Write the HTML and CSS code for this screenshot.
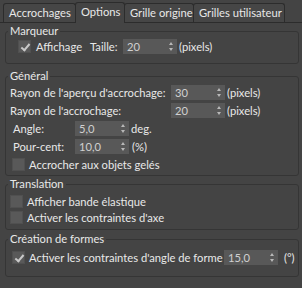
FILE: index.html
```html
<!DOCTYPE html>
<html lang="fr">
<head>
<meta charset="utf-8">
<link rel="stylesheet" href="styles.css">
</head>
<body>
<div class="tabs">
  <div class="tab t1">Accrochages</div>
  <div class="tab t2 active">Options</div>
  <div class="tab t3">Grille origine</div>
  <div class="tab t4">Grilles utilisateur</div>
</div>

<fieldset class="group g-marq">
  <legend>Marqueur</legend>
  <div class="row r-marq">
    <span class="cb checked"></span><span class="lbl l-aff">Affichage</span>
    <span class="lbl l-taille">Taille:</span>
    <span class="spin"><span class="val">20</span><span class="arr"></span></span>
    <span class="unit">(pixels)</span>
  </div>
</fieldset>

<fieldset class="group g-gen">
  <legend>Général</legend>
  <div class="row">
    <span class="lbl l-rayon">Rayon de l'aperçu d'accrochage:</span>
    <span class="spin"><span class="val">30</span><span class="arr"></span></span>
    <span class="unit">(pixels)</span>
  </div>
  <div class="row">
    <span class="lbl l-rayon">Rayon de l'accrochage:</span>
    <span class="spin"><span class="val">20</span><span class="arr"></span></span>
    <span class="unit">(pixels)</span>
  </div>
  <div class="row">
    <span class="lbl l-angle">Angle:</span>
    <span class="spin"><span class="val">5,0</span><span class="arr"></span></span>
    <span class="unit">deg.</span>
  </div>
  <div class="row">
    <span class="lbl l-angle">Pour-cent:</span>
    <span class="spin"><span class="val">10,0</span><span class="arr"></span></span>
    <span class="unit u-pct">(%)</span>
  </div>
  <div class="row r-cb r-gel">
    <span class="cb"></span><span class="lbl">Accrocher aux objets gelés</span>
  </div>
</fieldset>

<fieldset class="group g-trans">
  <legend>Translation</legend>
  <div class="row r-cb r-tr">
    <span class="cb"></span><span class="lbl">Afficher bande élastique</span>
  </div>
  <div class="row r-cb r-tr">
    <span class="cb"></span><span class="lbl">Activer les contraintes d'axe</span>
  </div>
</fieldset>

<fieldset class="group g-crea">
  <legend>Création de formes</legend>
  <div class="row r-cb r-crea">
    <span class="cb checked"></span><span class="lbl l-crea">Activer les contraintes d'angle de forme</span>
    <span class="spin"><span class="val">15,0</span><span class="arr"></span></span>
    <span class="unit u-deg">(°)</span>
  </div>
</fieldset>
</body>
</html>
```
FILE: styles.css
```css
html, body {
  margin: 0;
  padding: 0;
  background: #444444;
  width: 302px;
  height: 288px;
  overflow: hidden;
}
body {
  font-family: Lato, sans-serif;
  font-size: 11.2px;
  color: #e8e8e8;
}

.tabs {
  display: flex;
  height: 20px;
  padding: 2px 0 0 3px;
  border-bottom: 1px solid #2c2c2c;
  box-sizing: content-box;
}
.tab {
  height: 19px;
  margin-top: 1px;
  border: 1px solid #2c2c2c;
  border-bottom: none;
  border-radius: 3px 3px 0 0;
  box-sizing: border-box;
  padding-left: 5px;
  line-height: 17px;
  white-space: nowrap;
  background: #464646;
}
.tab + .tab { margin-left: -1px; }
.t1 { width: 73px; }
.t2 { width: 50px; }
.t3 { width: 70px; }
.t4 { width: 92px; }
.tab.active {
  height: 21px;
  margin-top: 0;
  margin-bottom: -1px;
  background: #444444;
  position: relative;
}

.group {
  margin: 0 3px 0 5px;
  border: 1px solid #353535;
  border-radius: 3px;
  padding: 0 0 0 2px;
  min-width: 0;
}
.group legend {
  padding: 0 2px;
  line-height: 14px;
  height: 14px;
  color: #e8e8e8;
}

.row {
  display: flex;
  align-items: center;
  height: 18px;
  white-space: nowrap;
}
.lbl { display: inline-block; }

.cb {
  width: 13px;
  height: 13px;
  box-sizing: border-box;
  background: #595959;
  border: 1px solid #505050;
  flex: none;
  position: relative;
}
.cb.checked::after {
  content: "";
  position: absolute;
  left: 4px;
  top: 1px;
  width: 3px;
  height: 7px;
  border-right: 2px solid #c9c9c9;
  border-bottom: 2px solid #c9c9c9;
  transform: rotate(40deg);
}

.spin {
  display: flex;
  align-items: center;
  justify-content: space-between;
  width: 54px;
  height: 15px;
  box-sizing: border-box;
  background: #585858;
  color: #d0d0d0;
  padding: 0 3px 0 4px;
  flex: none;
}
.spin .val { line-height: 15px; }
.spin .arr {
  width: 5px;
  height: 9px;
  position: relative;
}
.spin .arr::before, .spin .arr::after {
  content: "";
  position: absolute;
  left: 0;
  border-left: 2.5px solid transparent;
  border-right: 2.5px solid transparent;
}
.spin .arr::before { top: 0; border-bottom: 3px solid #b8b8b8; }
.spin .arr::after { bottom: 0; border-top: 3px solid #b8b8b8; }
.unit { margin-left: 2px; }

/* Marqueur */
.g-marq { margin-top: 1px; padding-bottom: 9px; }
.r-marq { height: 16px; }
.r-marq .cb { margin-left: 10px; }
.l-aff { margin-left: 5px; width: 54px; }
.l-taille { width: 33px; }

/* Général */
.g-gen { margin-top: 5px; padding-bottom: 2px; }
.l-rayon { width: 161px; margin-left: 2px; }
.l-angle { width: 62px; margin-left: 5px; }
.u-pct { margin-left: 3px; }
.r-gel .cb { margin-left: 4px; }
.r-cb .cb + .lbl { margin-left: 4px; }

/* Translation */
.g-trans { margin-top: 1px; padding-top: 2px; padding-bottom: 4px; }
.r-tr { height: 16px; }
.r-tr .cb { margin-left: 2px; }

/* Création */
.g-crea { margin-top: 2px; padding-top: 2px; padding-bottom: 10px; }
.r-crea .cb { margin-left: 4px; }
.l-crea { width: 195px; }
.u-deg { margin-left: 6px; }
```
